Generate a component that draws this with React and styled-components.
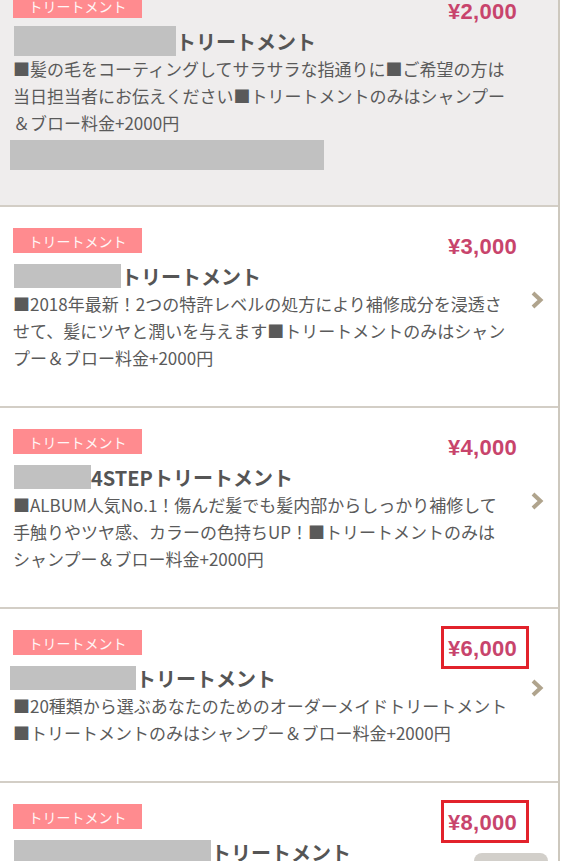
import React from 'react';
import styled, { createGlobalStyle } from 'styled-components';

const GlobalStyle = createGlobalStyle`
    html, body {
        margin: 0;
        padding: 0;
        background: #fff;
        overflow: hidden;
    }
    body {
        font-family: "Noto Sans CJK JP", "Noto Sans", sans-serif;
        color: #555;
    }
`;

const Page = styled.div`
    width: 560px;
    height: 861px;
    overflow: hidden;
    box-sizing: border-box;
    border-right: 2px solid #cdc8be;
`;

const List = styled.div`
    margin-top: -28px;
`;

const Card = styled.div`
    display: grid;
    grid-template-columns: 1fr 40px;
    align-items: center;
    padding: 21px 0 35px 13px;
    background: ${(p) => (p.active ? '#efeded' : '#fff')};
    border-bottom: 2px solid #d3cec6;
`;

const Body = styled.div`
    min-width: 0;
`;

const Head = styled.div`
    display: flex;
    justify-content: space-between;
    align-items: flex-end;
    height: 25px;
`;

const Badge = styled.span`
    display: inline-flex;
    align-items: center;
    justify-content: center;
    width: 129px;
    height: 25px;
    background: #ff8b8f;
    color: #fff6f6;
    font-size: 14px;
    line-height: 1;
`;

const Price = styled.span`
    position: relative;
    font-family: "Liberation Sans", Arial, sans-serif;
    font-weight: 700;
    font-size: 22px;
    line-height: 22px;
    letter-spacing: 0.3px;
    color: #c8446c;
    margin-right: 1px;
    margin-bottom: -5px;

    ${(p) =>
        p.marked &&
        `
        &::after {
            content: '';
            position: absolute;
            top: -12px;
            bottom: -9px;
            left: -7px;
            right: -12px;
            border: 3px solid #e2222b;
        }
    `}
`;

const Title = styled.div`
    display: flex;
    align-items: center;
    margin-top: 9px;
    height: 28px;
    font-size: 20px;
    font-weight: 700;
    color: #555;
    white-space: nowrap;
`;

const Redact = styled.span`
    display: inline-block;
    flex-shrink: 0;
    width: ${(p) => p.w}px;
    height: ${(p) => p.h || 24}px;
    margin-left: ${(p) => p.ml || 1}px;
    background: #c1c1c1;
`;

const Desc = styled.div`
    font-size: 17px;
    line-height: 27px;
    color: #5a5a5a;
    white-space: nowrap;
`;

const Block = styled.div`
    width: 314px;
    height: 30px;
    margin: 4px 0 0 -3px;
    background: #c1c1c1;
`;

const Arrow = styled.div`
    display: flex;
    justify-content: center;
    align-items: center;
    padding-right: 2px;
`;

const ReserveButton = styled.span`
    align-self: flex-start;
    margin: 15px -30px 0 auto;
    width: 74px;
    height: 30px;
    border-radius: 8px;
    background: #d2cfca;
`;

const Chevron = () => (
    <svg width="14" height="18" viewBox="0 0 14 18">
        <polyline points="3,2 10.5,9 3,16" fill="none" stroke="#b0a48d" strokeWidth="4" />
    </svg>
);

const menus = [
    {
        price: '¥2,000',
        active: true,
        redact: 162,
        redactH: 30,
        name: 'トリートメント',
        lines: [
            '■髪の毛をコーティングしてサラサラな指通りに■ご希望の方は',
            '当日担当者にお伝えください■トリートメントのみはシャンプー',
            '＆ブロー料金+2000円',
        ],
        block: true,
    },
    {
        price: '¥3,000',
        redact: 107,
        name: 'トリートメント',
        lines: [
            '■2018年最新！2つの特許レベルの処方により補修成分を浸透さ',
            'せて、髪にツヤと潤いを与えます■トリートメントのみはシャン',
            'プー＆ブロー料金+2000円',
        ],
        arrow: true,
    },
    {
        price: '¥4,000',
        redact: 77,
        name: '4STEPトリートメント',
        lines: [
            '■ALBUM人気No.1！傷んだ髪でも髪内部からしっかり補修して',
            '手触りやツヤ感、カラーの色持ちUP！■トリートメントのみは',
            'シャンプー＆ブロー料金+2000円',
        ],
        arrow: true,
    },
    {
        price: '¥6,000',
        marked: true,
        redact: 126,
        redactMl: -3,
        name: 'トリートメント',
        lines: [
            '■20種類から選ぶあなたのためのオーダーメイドトリートメント',
            '■トリートメントのみはシャンプー＆ブロー料金+2000円',
        ],
        arrow: true,
    },
    {
        price: '¥8,000',
        marked: true,
        redact: 197,
        name: 'トリートメント',
        lines: [
            '■スペシャルケアで髪の芯から潤いを与え、まとまりのある髪へ',
            '■トリートメントのみはシャンプー＆ブロー料金+2000円',
        ],
        button: true,
    },
];

const App = () => {
    return (
        <>
            <GlobalStyle />
            <Page>
                <List>
                    {menus.map((m, i) => (
                        <Card key={i} active={m.active}>
                            <Body>
                                <Head>
                                    <Badge>トリートメント</Badge>
                                    <Price marked={m.marked}>{m.price}</Price>
                                </Head>
                                <Title>
                                    <Redact w={m.redact} h={m.redactH} ml={m.redactMl} />
                                    {m.name}
                                    {m.button && <ReserveButton />}
                                </Title>
                                <Desc>
                                    {m.lines.map((line, j) => (
                                        <div key={j}>{line}</div>
                                    ))}
                                </Desc>
                                {m.block && <Block />}
                            </Body>
                            <Arrow>{m.arrow && <Chevron />}</Arrow>
                        </Card>
                    ))}
                </List>
            </Page>
        </>
    );
};

export default App;
